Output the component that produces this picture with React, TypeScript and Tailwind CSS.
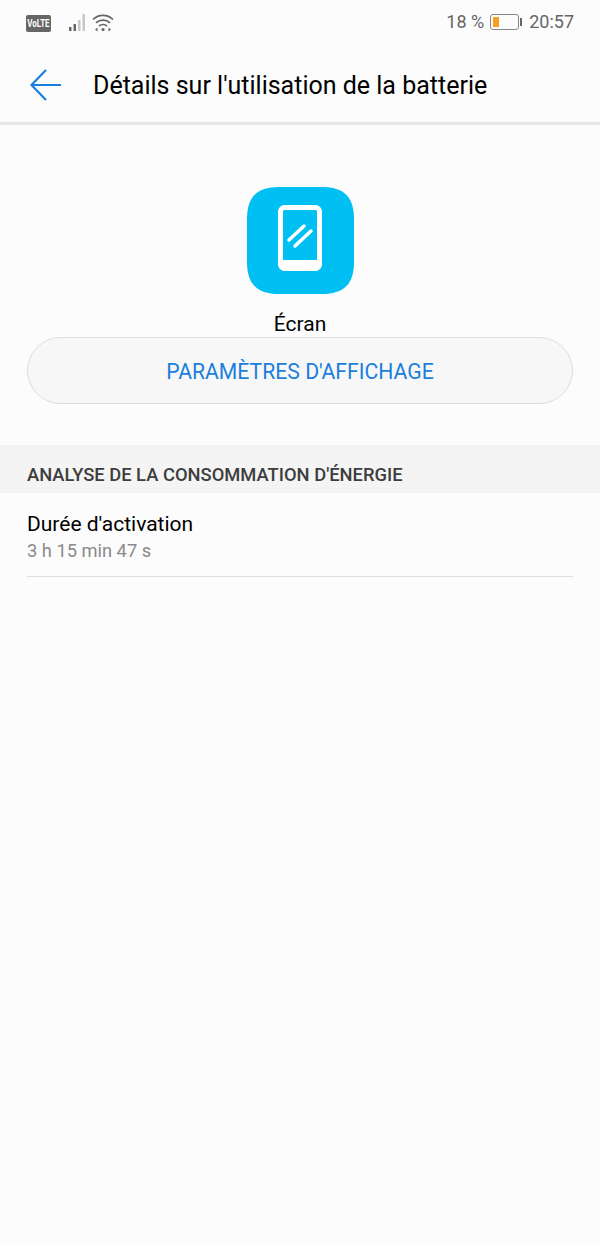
function StatusBar() {
    return (
        <div className="h-[46px] flex items-center justify-between pl-[26px] pr-[26px] text-[#666666]">
            <div className="flex items-center">
                <span className="w-[25px] h-[17px] rounded-[2px] bg-[#666666] flex items-center justify-center overflow-hidden">
                    <span className="text-white text-[11px] font-bold leading-[17px] scale-x-[0.72] whitespace-nowrap">VoLTE</span>
                </span>
                <svg width="20" height="18" viewBox="0 0 20 18" className="ml-[17px]">
                    <rect x="1" y="13" width="2.5" height="4" fill="#666666" />
                    <rect x="5.500" y="10" width="2.500" height="7" fill="#666666" />
                    <rect x="10" y="6" width="2.500" height="11" fill="#c8c8c8" />
                    <rect x="14.500" y="0" width="2.500" height="17" fill="#c8c8c8" />
                </svg>
                <svg width="22" height="18" viewBox="0 0 22 18" className="ml-[4px]" fill="none" stroke="#666666" strokeWidth="1.700">
                    <path d="M1 5.500c5.500-5.500 14.500-5.500 20 0" />
                    <path d="M4 8.800c3.800-3.600 10.200-3.600 14 0" />
                    <path d="M7 12c2.200-2 5.800-2 8 0" />
                    <circle cx="11" cy="15.500" r="1.600" fill="#666666" stroke="none" />
                    <path d="M5.500 13.500l-2.500 2 2.500 2zM16.500 13.500l2.500 2-2.500 2z" fill="#666666" stroke="none" />
                </svg>
            </div>
            <div className="flex items-center text-[18px] leading-[24px] -translate-y-px">
                <span>18 %</span>
                <div className="ml-[6px] w-[29px] h-[16px] rounded-[3px] border border-[#888888] p-[2px]">
                    <div className="w-[6px] h-full bg-[#f5a01e]" />
                </div>
                <div className="ml-[1px] w-[2px] h-[8px] bg-[#666666]" />
                <span className="ml-[7px]">20:57</span>
            </div>
        </div>
    )
}

export default function App() {
    return (
        <div className="w-[600px] h-[1244px] bg-[#fcfcfc] font-['Roboto',sans-serif] flex flex-col">
            <StatusBar />
            <div className="h-[79px] flex items-center border-b-[3px] border-[#e6e6e6]">
                <svg width="32" height="32" viewBox="0 0 32 32" fill="none" stroke="#1a7fdc" strokeWidth="2.200" className="ml-[30px] mt-[2px]">
                    <path d="M16 1L1.500 16L16 31M1.500 16H31" />
                </svg>
                <span className="ml-[31px] mt-[4px] text-[25px] text-black">Détails sur l'utilisation de la batterie</span>
            </div>
            <div className="flex flex-col items-center mt-[62px]">
                <svg width="107" height="107" viewBox="0 0 107 107" fill="none">
                    <path
                        d="M32 0H75C97 0 107 10 107 32V75C107 97 97 107 75 107H32C10 107 0 97 0 75V32C0 10 10 0 32 0Z"
                        fill="#00c0f3"
                    />
                    <rect x="33.500" y="20.500" width="39" height="61" rx="4" stroke="#ffffff" strokeWidth="5" />
                    <rect x="33" y="73" width="40" height="9" fill="#ffffff" />
                    <path d="M42 53L57 39M48 59L64 44" stroke="#ffffff" strokeWidth="3.500" strokeLinecap="round" />
                </svg>
                <div className="mt-[18px] text-[21px] leading-[24px] text-black">Écran</div>
            </div>
            <div className="mx-[27px] mt-[1px] h-[67px] pt-[2px] rounded-full border border-[#dcdcdc] bg-[#f7f7f7] flex items-center justify-center text-[21.2px] text-[#1a7fdc]">
                PARAMÈTRES D'AFFICHAGE
            </div>
            <div className="mt-[41px] h-[48px] bg-[#f4f4f4] pl-[27px] pt-[18px] text-[18.350px] leading-[24px] font-medium text-[#3d3d3d]">
                ANALYSE DE LA CONSOMMATION D'ÉNERGIE
            </div>
            <div className="mx-[27px] h-[84px] border-b border-[#dedede] pt-[18px]">
                <div className="text-[21px] leading-[26px] text-black">Durée d'activation</div>
                <div className="text-[18.300px] leading-[28px] text-[#8a8a8a]">3 h 15 min 47 s</div>
            </div>
        </div>
    )
}
